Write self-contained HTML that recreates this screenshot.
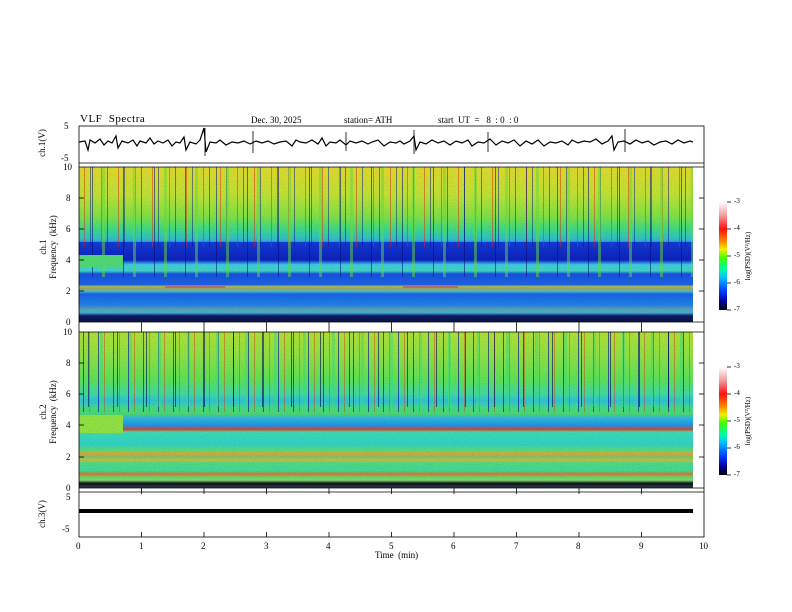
<!DOCTYPE html>
<html><head><meta charset="utf-8"><style>
html,body{margin:0;padding:0;background:#fff;}
body{width:792px;height:612px;position:relative;overflow:hidden;font-family:"Liberation Serif",serif;color:#000;}
.t{position:absolute;font-size:9px;white-space:nowrap;}
.s{position:absolute;}
</style></head><body>
<div class="t" style="left:80px;top:113px;font-size:11px;letter-spacing:0.5px">VLF&nbsp; Spectra</div>
<div class="t" style="left:251px;top:115px">Dec. 30, 2025</div>
<div class="t" style="left:344px;top:115px">station= ATH</div>
<div class="t" style="left:438px;top:115px">start&nbsp; UT&nbsp; =&nbsp;&nbsp; 8&nbsp; : 0&nbsp; : 0</div>

<div class="s" style="left:79px;top:167px;width:614px;height:155px;background:linear-gradient(to bottom,#e0d828 0%,#c0e030 18%,#80e040 32%,#40d880 40%,#30c0c0 46%,#30a8d8 48%,#c0a050 47.5%,#1438d0 48.5%,#0c20b8 60%,#40c8e0 63%,#40d0c0 67%,#1450d8 69%,#2060e0 76%,#a0c050 77%,#a0a060 78.5%,#50c0c0 80%,#1860e0 82%,#2080e0 89%,#60a0b0 92%,#40b0d0 94%,#101860 96%,#081040 100%);"></div>
<div class="s" style="left:79px;top:167px;width:614px;height:80px;background:repeating-linear-gradient(90deg,transparent 0,transparent 5px,rgba(220,40,20,.5) 5px,rgba(220,40,20,.5) 6px,transparent 6px,transparent 11px,rgba(10,20,140,.5) 11px,rgba(10,20,140,.5) 12px,transparent 12px,transparent 17px);"></div>
<div class="s" style="left:79px;top:167px;width:614px;height:110px;background:repeating-linear-gradient(90deg,transparent 0,transparent 13px,rgba(0,10,120,.55) 13px,rgba(0,10,120,.55) 14px,transparent 14px,transparent 23px,rgba(100,220,60,.5) 23px,rgba(100,220,60,.5) 26px,transparent 26px,transparent 31px);"></div>
<div class="s" style="left:79px;top:255px;width:44px;height:12px;background:#50d870;"></div>
<div class="s" style="left:165px;top:285px;width:60px;height:3px;background:#b07070;"></div>
<div class="s" style="left:403px;top:285px;width:55px;height:3px;background:#b07070;"></div>

<div class="s" style="left:79px;top:332px;width:614px;height:156px;background:linear-gradient(to bottom,#b0e030 0%,#90e040 15%,#60e050 30%,#40d8a0 40%,#30c0d0 44%,#40d890 48%,#50d860 52%,#30b8d8 55%,#2090e0 60%,#e04020 62.5%,#40d8b0 64%,#30d0c0 72%,#60d870 76%,#e8a030 78%,#80c060 80%,#c0c040 82%,#50d880 84%,#40d890 89%,#e07030 91%,#60d860 93%,#80d870 95%,#101010 97%,#304050 100%);"></div>
<div class="s" style="left:79px;top:332px;width:614px;height:80px;background:repeating-linear-gradient(90deg,transparent 0,transparent 4px,rgba(10,20,150,.65) 4px,rgba(10,20,150,.65) 5px,transparent 5px,transparent 10px,rgba(220,50,20,.45) 10px,rgba(220,50,20,.45) 11px,transparent 11px,transparent 15px);"></div>
<div class="s" style="left:79px;top:332px;width:614px;height:75px;background:repeating-linear-gradient(90deg,transparent 0,transparent 9px,rgba(0,0,90,.6) 9px,rgba(0,0,90,.6) 10px,transparent 10px,transparent 21px,rgba(60,220,120,.5) 21px,rgba(60,220,120,.5) 24px,transparent 24px,transparent 29px);"></div>
<div class="s" style="left:79px;top:415px;width:44px;height:18px;background:#90e040;"></div>

<div class="s" style="left:719px;top:202px;width:8px;height:108px;background:linear-gradient(to bottom,#fff 0%,#f0a0a0 12%,#ff1010 25%,#ff8000 36%,#f0f000 44%,#40ff00 52%,#00ffa0 62%,#00c0ff 70%,#0040ff 82%,#0000a0 92%,#000 100%);"></div>
<div class="s" style="left:719px;top:367px;width:8px;height:108px;background:linear-gradient(to bottom,#fff 0%,#f0a0a0 12%,#ff1010 25%,#ff8000 36%,#f0f000 44%,#40ff00 52%,#00ffa0 62%,#00c0ff 70%,#0040ff 82%,#0000a0 92%,#000 100%);"></div>

<svg width="792" height="612" style="position:absolute;left:0;top:0" xmlns="http://www.w3.org/2000/svg">
<defs>
<filter id="n" x="0" y="0" width="100%" height="100%">
<feTurbulence type="fractalNoise" baseFrequency="0.9" numOctaves="1" seed="3" result="t"/>
<feColorMatrix type="matrix" values="0 0 0 0 0  0 0 0 0 0.1  0 0 0 0 0.5  0 0 0 -3 1.5"/>
</filter>
</defs>
<rect x="79" y="167" width="614" height="155" filter="url(#n)" opacity="0.2"/>
<rect x="79" y="332" width="614" height="156" filter="url(#n)" opacity="0.2"/>
<g stroke="#000" stroke-width="0.8" fill="none">
<rect x="79" y="126" width="625" height="411"/>
<line x1="79" y1="163" x2="704" y2="163"/>
<line x1="79" y1="167" x2="704" y2="167"/>
<line x1="79" y1="322" x2="704" y2="322"/>
<line x1="79" y1="332" x2="704" y2="332"/>
<line x1="79" y1="488" x2="704" y2="488"/>
<line x1="79" y1="492" x2="704" y2="492"/>
</g>
<path d="M79 142 L85 141 L88 150 L90 140 L95 143 L100 139 L104 145 L108 141 L112 143 L116 136 L118 148 L122 141 L128 143 L133 140 L137 146 L140 141 L146 143 L150 138 L154 144 L158 141 L163 143 L168 140 L172 146 L176 142 L180 143 L184 137 L186 150 L190 142 L196 144 L200 140 L204 128 L206 152 L210 142 L216 143 L220 140 L226 145 L232 142 L238 143 L244 141 L250 144 L256 141 L262 143 L268 141 L274 144 L280 142 L286 141 L292 146 L296 140 L300 142 L306 143 L312 140 L318 144 L322 138 L326 146 L330 142 L336 143 L340 140 L346 145 L350 141 L356 143 L362 141 L368 144 L372 142 L378 140 L384 146 L390 142 L396 143 L400 141 L404 144 L410 141 L414 136 L416 150 L420 142 L426 144 L432 140 L438 143 L444 141 L450 145 L456 141 L462 143 L468 140 L472 146 L478 142 L484 143 L490 139 L496 145 L502 141 L508 143 L514 140 L520 146 L526 141 L532 144 L538 140 L544 146 L550 142 L556 143 L562 141 L568 145 L572 140 L578 143 L584 141 L590 142 L596 139 L602 144 L608 141 L612 136 L614 150 L618 142 L624 141 L630 144 L636 140 L642 143 L648 141 L654 145 L660 142 L666 141 L672 144 L678 140 L684 143 L690 141 L693 142" stroke="#000" stroke-width="1.2" fill="none"/>
<g stroke="#000" stroke-width="0.8">
<line x1="205" y1="128" x2="205" y2="156"/><line x1="253" y1="131" x2="253" y2="153"/><line x1="414" y1="130" x2="414" y2="154"/><line x1="488" y1="132" x2="488" y2="152"/><line x1="625" y1="129" x2="625" y2="152"/><line x1="346" y1="132" x2="346" y2="151"/>
</g>
<rect x="79" y="509" width="614" height="4" fill="#000"/>
<g stroke="#000" stroke-width="0.8">
<line x1="141.5" y1="537" x2="141.5" y2="532"/><line x1="204" y1="537" x2="204" y2="532"/><line x1="266.5" y1="537" x2="266.5" y2="532"/><line x1="329" y1="537" x2="329" y2="532"/><line x1="391.5" y1="537" x2="391.5" y2="532"/><line x1="454" y1="537" x2="454" y2="532"/><line x1="516.5" y1="537" x2="516.5" y2="532"/><line x1="579" y1="537" x2="579" y2="532"/><line x1="641.5" y1="537" x2="641.5" y2="532"/>
<line x1="141.5" y1="322" x2="141.5" y2="332"/><line x1="204" y1="322" x2="204" y2="332"/><line x1="266.5" y1="322" x2="266.5" y2="332"/><line x1="329" y1="322" x2="329" y2="332"/><line x1="391.5" y1="322" x2="391.5" y2="332"/><line x1="454" y1="322" x2="454" y2="332"/><line x1="516.5" y1="322" x2="516.5" y2="332"/><line x1="579" y1="322" x2="579" y2="332"/><line x1="641.5" y1="322" x2="641.5" y2="332"/>
<line x1="141.5" y1="488" x2="141.5" y2="494"/><line x1="204" y1="488" x2="204" y2="494"/><line x1="266.5" y1="488" x2="266.5" y2="494"/><line x1="329" y1="488" x2="329" y2="494"/><line x1="391.5" y1="488" x2="391.5" y2="494"/><line x1="454" y1="488" x2="454" y2="494"/><line x1="516.5" y1="488" x2="516.5" y2="494"/><line x1="579" y1="488" x2="579" y2="494"/><line x1="641.5" y1="488" x2="641.5" y2="494"/>
<line x1="79" y1="198" x2="84" y2="198"/><line x1="79" y1="229" x2="84" y2="229"/><line x1="79" y1="260" x2="84" y2="260"/><line x1="79" y1="291" x2="84" y2="291"/>
<line x1="79" y1="363" x2="84" y2="363"/><line x1="79" y1="394" x2="84" y2="394"/><line x1="79" y1="425" x2="84" y2="425"/><line x1="79" y1="457" x2="84" y2="457"/>
<line x1="704" y1="198" x2="699" y2="198"/><line x1="704" y1="229" x2="699" y2="229"/><line x1="704" y1="260" x2="699" y2="260"/><line x1="704" y1="291" x2="699" y2="291"/>
<line x1="704" y1="363" x2="699" y2="363"/><line x1="704" y1="394" x2="699" y2="394"/><line x1="704" y1="425" x2="699" y2="425"/><line x1="704" y1="457" x2="699" y2="457"/>
<line x1="727" y1="202" x2="731" y2="202"/><line x1="727" y1="229" x2="731" y2="229"/><line x1="727" y1="256" x2="731" y2="256"/><line x1="727" y1="283" x2="731" y2="283"/><line x1="727" y1="310" x2="731" y2="310"/>
<line x1="727" y1="367" x2="731" y2="367"/><line x1="727" y1="394" x2="731" y2="394"/><line x1="727" y1="421" x2="731" y2="421"/><line x1="727" y1="448" x2="731" y2="448"/><line x1="727" y1="475" x2="731" y2="475"/>
</g>
</svg>

<div class="t" style="left:64px;top:121px">5</div>
<div class="t" style="left:61px;top:153px">-5</div>
<div class="t" style="left:63px;top:162px">10</div>
<div class="t" style="left:66px;top:193px">8</div>
<div class="t" style="left:66px;top:224px">6</div>
<div class="t" style="left:66px;top:255px">4</div>
<div class="t" style="left:66px;top:286px">2</div>
<div class="t" style="left:66px;top:317px">0</div>
<div class="t" style="left:63px;top:327px">10</div>
<div class="t" style="left:66px;top:358px">8</div>
<div class="t" style="left:66px;top:389px">6</div>
<div class="t" style="left:66px;top:420px">4</div>
<div class="t" style="left:66px;top:452px">2</div>
<div class="t" style="left:66px;top:483px">0</div>
<div class="t" style="left:66px;top:492px">5</div>
<div class="t" style="left:62px;top:524px">-5</div>
<div class="t" style="left:28px;top:138px;transform:rotate(-90deg);transform-origin:center">ch.1(V)</div>
<div class="t" style="left:8px;top:237px;transform:rotate(-90deg);width:80px;text-align:center;line-height:10px">ch.1<br>Frequency&nbsp; (kHz)</div>
<div class="t" style="left:8px;top:402px;transform:rotate(-90deg);width:80px;text-align:center;line-height:10px">ch.2<br>Frequency&nbsp; (kHz)</div>
<div class="t" style="left:28px;top:509px;transform:rotate(-90deg)">ch.3(V)</div>
<div class="t" style="left:76px;top:541px">0</div>
<div class="t" style="left:139px;top:541px">1</div>
<div class="t" style="left:201px;top:541px">2</div>
<div class="t" style="left:264px;top:541px">3</div>
<div class="t" style="left:326px;top:541px">4</div>
<div class="t" style="left:389px;top:541px">5</div>
<div class="t" style="left:451px;top:541px">6</div>
<div class="t" style="left:514px;top:541px">7</div>
<div class="t" style="left:576px;top:541px">8</div>
<div class="t" style="left:639px;top:541px">9</div>
<div class="t" style="left:699px;top:541px">10</div>
<div class="t" style="left:375px;top:550px">Time&nbsp; (min)</div>
<div class="t" style="left:734px;top:197px;font-size:7px">-3</div>
<div class="t" style="left:734px;top:224px;font-size:7px">-4</div>
<div class="t" style="left:734px;top:251px;font-size:7px">-5</div>
<div class="t" style="left:734px;top:278px;font-size:7px">-6</div>
<div class="t" style="left:734px;top:305px;font-size:7px">-7</div>
<div class="t" style="left:734px;top:362px;font-size:7px">-3</div>
<div class="t" style="left:734px;top:389px;font-size:7px">-4</div>
<div class="t" style="left:734px;top:416px;font-size:7px">-5</div>
<div class="t" style="left:734px;top:443px;font-size:7px">-6</div>
<div class="t" style="left:734px;top:470px;font-size:7px">-7</div>
<div class="t" style="left:708px;top:252px;font-size:7px;transform:rotate(-90deg);width:80px;text-align:center">log(PSD)(V²/Hz)</div>
<div class="t" style="left:708px;top:417px;font-size:7px;transform:rotate(-90deg);width:80px;text-align:center">log(PSD)(V²/Hz)</div>
</body></html>
